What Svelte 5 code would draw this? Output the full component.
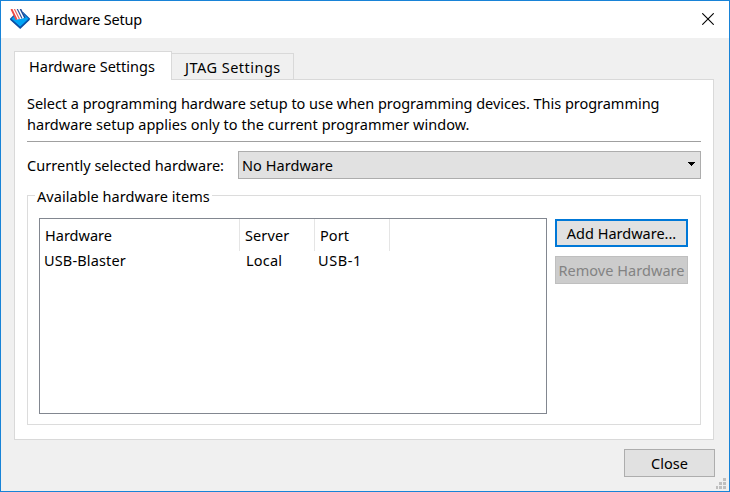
<script>
  const tabs = ['Hardware Settings', 'JTAG Settings'];
  let active = $state(0);
  const columns = ['Hardware', 'Server', 'Port'];
  const items = [['USB-Blaster', 'Local', 'USB-1']];
</script>

<div class="window">
  <header>
    <svg class="logo" width="22" height="21" viewBox="0 0 22 21">
      <path d="M1.6 10 5.5 6 14 3.5 20.4 9.8 11.2 18.4Z" fill="#00a4f5" stroke="#0b55ad" stroke-width="1.1" />
      <path d="M1.5 10.2 11.2 19l9.2-8.8" fill="none" stroke="#0b50a5" stroke-width="1.6" />
      <path d="M2 0h10.5l3.5 8.5-3 1.2-5.5.8Z" fill="#fff" />
      <path d="M2.4 0 7.6 10.6" stroke="#ee4b45" stroke-width="1.9" />
      <path d="m5.4 0 5 10" stroke="#e8625d" stroke-width="1.2" />
      <path d="m8.3 0 4.7 9.6" stroke="#2c549f" stroke-width="1.2" />
      <path d="m11.4 0 4.5 8.8" stroke="#1c4b9b" stroke-width="1.6" />
    </svg>
    <span class="title">Hardware Setup</span>
    <svg class="close" width="12" height="12" viewBox="0 0 12 12"><path d="m.3.3 11.4 11.4M11.7.3.3 11.7" stroke="#000" stroke-width="1.1" /></svg>
  </header>

  <main>
    <nav>
      {#each tabs as tab, i}
        <button class="tab" class:active={active === i} onclick={() => (active = i)}><span class="tab-{i}">{tab}</span></button>
      {/each}
    </nav>
    <section class="pane">
      <p><span class="p1">Select a programming hardware setup to use when programming devices. This programming</span><br /><span class="p2">hardware setup applies only to the current programmer window.</span></p>
      <div class="rule"></div>
      <div class="selector">
        <span class="label">Currently selected hardware:</span>
        <div class="combo">
          <span class="value">No Hardware</span>
          <svg width="7" height="4" viewBox="0 0 7 4" shape-rendering="crispEdges"><path d="M0 0h7v1H6v1H5v1H4v1H3V3H2V2H1V1H0Z" /></svg>
        </div>
      </div>
      <div class="group">
        <div class="legend"><span class="line lead"></span><span class="legend-text">Available hardware items</span><span class="line"></span></div>
        <div class="group-body">
          <div class="table">
            <div class="row head">
              {#each columns as c, i}<div class="cell c{i}"><span>{c}</span></div>{/each}
            </div>
            {#each items as item}
              <div class="row data">
                {#each item as v, i}<div class="cell d{i}"><span>{v}</span></div>{/each}
              </div>
            {/each}
          </div>
          <div class="actions">
            <button class="push focus"><span class="add">Add Hardware...</span></button>
            <button class="push" disabled><span class="remove">Remove Hardware</span></button>
          </div>
        </div>
      </div>
    </section>
    <footer>
      <button class="push ok"><span>Close</span></button>
    </footer>
  </main>
  <svg class="grip" width="10" height="11" viewBox="0 0 10 11" fill="#bfbfbf" shape-rendering="crispEdges">
    <path d="M7 0h3v3H7ZM3 4h3v3H3ZM7 4h3v3H7ZM0 8h2v3H0ZM3 8h3v3H3ZM7 8h3v3H7Z" />
  </svg>
</div>

<style>
  * { box-sizing: border-box; }
  .window {
    position: relative; width: 730px; height: 492px; border: 1px solid #1883d7; background: #f0f0f0;
    display: flex; flex-direction: column; overflow: hidden; color: #000;
    font: 14.5px/21px "Noto Sans", "Open Sans", sans-serif; white-space: nowrap;
  }
  button { font: inherit; color: inherit; padding: 0; margin: 0; border-radius: 0; }
  header { height: 37px; background: #fff; display: flex; align-items: center; padding: 0 15px 0 8px; }
  .logo { flex: none; }
  .title { margin-left: 4px; letter-spacing: -.21px; }
  .close { margin: 0 0 2px auto; }
  main { padding: 13px 15px 0 13px; }
  nav { display: flex; align-items: flex-end; height: 28px; }
  .tab { width: 123px; height: 26px; border: 1px solid #d9d9d9; border-bottom: 0; background: #f0f0f0; text-align: left; padding: 2px 0 0 13px; margin-left: -1px; }
  .tab-1 { letter-spacing: .48px; }
  .tab.active { width: 158px; height: 29px; margin: 0 0 -1px; background: #fff; padding: 0 0 0 14px; z-index: 1; }
  .pane { width: 700px; height: 361px; border: 1px solid #d9d9d9; background: #fff; padding: 13px 12px 0; }
  p { margin: 0; height: 42px; }
  .p1 { letter-spacing: -.03px; }
  .p2 { letter-spacing: .025px; }
  .rule { height: 1px; background: #a0a0a0; margin-top: 6px; }
  .selector { display: flex; align-items: center; margin-top: 9px; height: 28px; }
  .label { width: 211px; letter-spacing: .03px; }
  .combo { width: 463px; height: 28px; border: 1px solid #adadad; background: #e1e1e1; display: flex; align-items: center; justify-content: space-between; padding: 1px 5px 0 3px; }
  .combo svg { margin-top: -3px; }
  .value { letter-spacing: .05px; }
  .group { height: 230px; margin-top: 16px; border: 1px solid #dcdcdc; border-top: 0; }
  .legend { display: flex; height: 1px; align-items: center; }
  .line { height: 1px; flex: 1; background: #dcdcdc; }
  .lead { flex: 0 0 7px; margin-right: 2px; }
  .legend-text { margin-right: 2px; padding-top: 1px; letter-spacing: .05px; }
  .group-body { display: flex; padding: 22px 0 0 11px; }
  .table { width: 508px; height: 196px; border: 1px solid #828790; }
  .row { display: flex; }
  .head { height: 32px; }
  .head .cell { height: 32px; border-right: 1px solid #e5e5e5; padding: 6px 0 0 5px; width: 75px; letter-spacing: .1px; }
  .head .c0 { width: 200px; letter-spacing: 0; }
  .data { height: 20px; margin-top: -1px; }
  .data .cell { width: 75px; padding-left: 4px; letter-spacing: .2px; }
  .data .d0 { width: 202px; letter-spacing: .15px; }
  .data .d1 { width: 72px; }
  .data .d2 { letter-spacing: .6px; }
  .actions { display: flex; flex-direction: column; gap: 9px; margin: 1px 0 0 8px; }
  .push { width: 133px; height: 28px; border: 1px solid #adadad; background: #e1e1e1; display: flex; align-items: center; justify-content: center; }
  .push.focus { border: 2px solid #0078d7; }
  .push:disabled { background: #ccc; border-color: #bfbfbf; color: #838383; }
  .remove { letter-spacing: .04px; }
  footer { display: flex; justify-content: flex-end; padding-top: 9px; width: 701px; }
  .ok { width: 91px; }
  .grip { position: absolute; right: 3px; bottom: 2px; }
</style>
